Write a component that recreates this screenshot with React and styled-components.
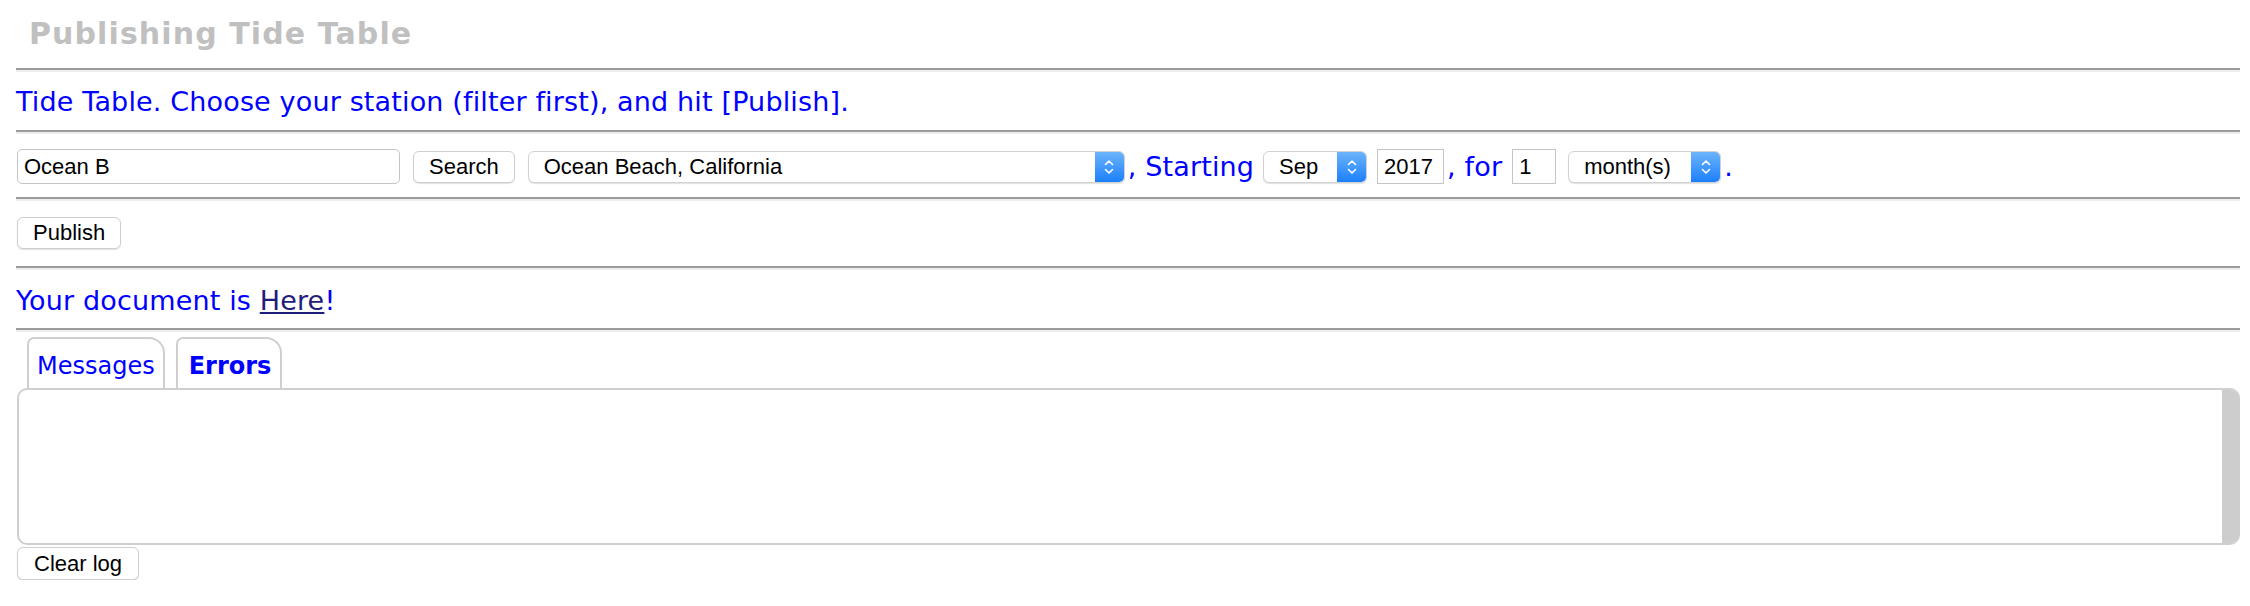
import React from 'react'
import styled, { createGlobalStyle } from 'styled-components'

const GlobalStyle = createGlobalStyle`
  html, body {
    margin: 0;
    padding: 0;
    background: #ffffff;
  }
  body {
    font-family: 'DejaVu Sans', Verdana, sans-serif;
  }
`

const ChevronPair = () => (
  <svg width="12" height="18" viewBox="0 0 12 18">
    <path d="M2.5 6.5 L6 3 L9.5 6.5" fill="none" stroke="#ffffff" strokeWidth="1.6" strokeLinecap="round" strokeLinejoin="round" />
    <path d="M2.5 11.5 L6 15 L9.5 11.5" fill="none" stroke="#ffffff" strokeWidth="1.6" strokeLinecap="round" strokeLinejoin="round" />
  </svg>
)

const Select = ({ width, value, ml }) => (
  <SelectBox $width={width} $ml={ml}>
    <SelectValue>{value}</SelectValue>
    <SelectArrow>
      <ChevronPair />
    </SelectArrow>
  </SelectBox>
)

const App = () => {
  return (
    <Page>
      <GlobalStyle />
      <Title>Publishing Tide Table</Title>
      <Rule />
      <Lead>Tide Table. Choose your station (filter first), and hit [Publish].</Lead>
      <Rule />
      <FormRow>
        <TextField $width={383} defaultValue="Ocean B" />
        <Button $ml={13}>Search</Button>
        <Select width={597} ml={13} value="Ocean Beach, California" />
        <Inline $ml={3}>, Starting</Inline>
        <Select width={104} ml={9} value="Sep" />
        <TextField $width={67} $ml={10} defaultValue="2017" />
        <Inline $ml={3}>, for</Inline>
        <TextField $width={44} $ml={10} defaultValue="1" />
        <Select width={153} ml={12} value="month(s)" />
        <Inline $ml={3}>.</Inline>
      </FormRow>
      <Rule />
      <ButtonRow>
        <Button>Publish</Button>
      </ButtonRow>
      <Rule />
      <Status>
        Your document is <DocLink href="#">Here</DocLink>!
      </Status>
      <Rule />
      <Tabs>
        <Tab>Messages</Tab>
        <Tab $active>Errors</Tab>
      </Tabs>
      <LogPanel>
        <LogBody />
        <Scrollbar />
      </LogPanel>
      <Button $small>Clear log</Button>
    </Page>
  )
}

const Page = styled.div`
  padding: 0 10px 0 16px;
  color: #0000ff;
`
const Title = styled.h1`
  margin: 0;
  height: 68px;
  box-sizing: border-box;
  padding: 16px 0 0 13px;
  font-family: 'DejaVu Sans', Verdana, sans-serif;
  font-size: 30px;
  font-weight: bold;
  color: #c0c0c0;
  letter-spacing: 1.1px;
`
const Rule = styled.div`
  height: 2px;
  background: #9b9b9b;
  border-bottom: 2px solid #ededed;
`
const BlueText = `
  font-size: 27px;
  letter-spacing: 0.15px;
  color: #0000ff;
  white-space: nowrap;
`
const Lead = styled.div`
  ${BlueText}
  height: 58px;
  box-sizing: border-box;
  padding-top: 14px;
`
const FormRow = styled.div`
  box-sizing: border-box;
  padding: 15px 0 13px;
  display: flex;
  align-items: center;
  white-space: nowrap;
  > * {
    flex: none;
  }
`
const ControlFont = `
  font-family: 'Liberation Sans', Arial, sans-serif;
  font-size: 22px;
  color: #000000;
`
const TextField = styled.input`
  ${ControlFont}
  width: ${(p) => p.$width}px;
  height: 35px;
  margin-left: ${(p) => p.$ml || 1}px;
  box-sizing: border-box;
  border: 1px solid #c4c4c4;
  border-radius: ${(p) => (p.$width > 100 ? 5 : 0)}px;
  padding: 0 6px;
  outline: none;
  background: #ffffff;
`
const Button = styled.button`
  ${ControlFont}
  display: block;
  height: ${(p) => (p.$small ? 33 : 32)}px;
  margin: ${(p) => (p.$small ? '2px 0 0 1px' : `0 0 0 ${p.$ml || 1}px`)};
  padding: 0 ${(p) => (p.$small ? 16 : 15)}px;
  box-sizing: border-box;
  background: #ffffff;
  border: 1px solid #cfcfcf;
  border-radius: 6px;
  box-shadow: 0 1px 1px rgba(0, 0, 0, 0.12);
`
const SelectBox = styled.div`
  ${ControlFont}
  width: ${(p) => p.$width}px;
  height: 32px;
  margin-left: ${(p) => p.$ml}px;
  box-sizing: border-box;
  display: flex;
  align-items: stretch;
  border: 1px solid #d2d2d2;
  border-radius: 6px;
  overflow: hidden;
  box-shadow: 0 1px 1px rgba(0, 0, 0, 0.12);
  background: #ffffff;
`
const SelectValue = styled.div`
  flex: 1;
  display: flex;
  align-items: center;
  padding-left: 15px;
`
const SelectArrow = styled.div`
  width: 29px;
  display: flex;
  align-items: center;
  justify-content: center;
  background: linear-gradient(#6cb4fb, #1c7ffb);
`
const Inline = styled.span`
  ${BlueText}
  margin-left: ${(p) => p.$ml}px;
`
const ButtonRow = styled.div`
  height: 65px;
  box-sizing: border-box;
  padding-top: 16px;
`
const Status = styled.div`
  ${BlueText}
  height: 58px;
  box-sizing: border-box;
  padding-top: 15px;
`
const DocLink = styled.a`
  color: #1f1d7c;
  text-decoration: underline;
`
const Tabs = styled.div`
  display: flex;
  gap: 11px;
  margin-top: 5px;
  padding-left: 11px;
`
const Tab = styled.div`
  height: 51px;
  box-sizing: border-box;
  display: flex;
  align-items: center;
  padding: 4px ${(p) => (p.$active ? 9 : 8)}px 0 ${(p) => (p.$active ? 11 : 8)}px;
  border: 2px solid #cfcfcf;
  border-bottom: none;
  border-radius: 7px 16px 0 0;
  font-size: 24px;
  font-weight: ${(p) => (p.$active ? 'bold' : 'normal')};
  color: #0000ff;
  background: #ffffff;
`
const LogPanel = styled.div`
  height: 157px;
  margin-left: 1px;
  box-sizing: border-box;
  display: flex;
  border: 2px solid #cfcfcf;
  border-right: none;
  border-radius: 10px;
  overflow: hidden;
`
const LogBody = styled.div`
  flex: 1;
`
const Scrollbar = styled.div`
  width: 18px;
  background: #cdcdcd;
`

export default App
